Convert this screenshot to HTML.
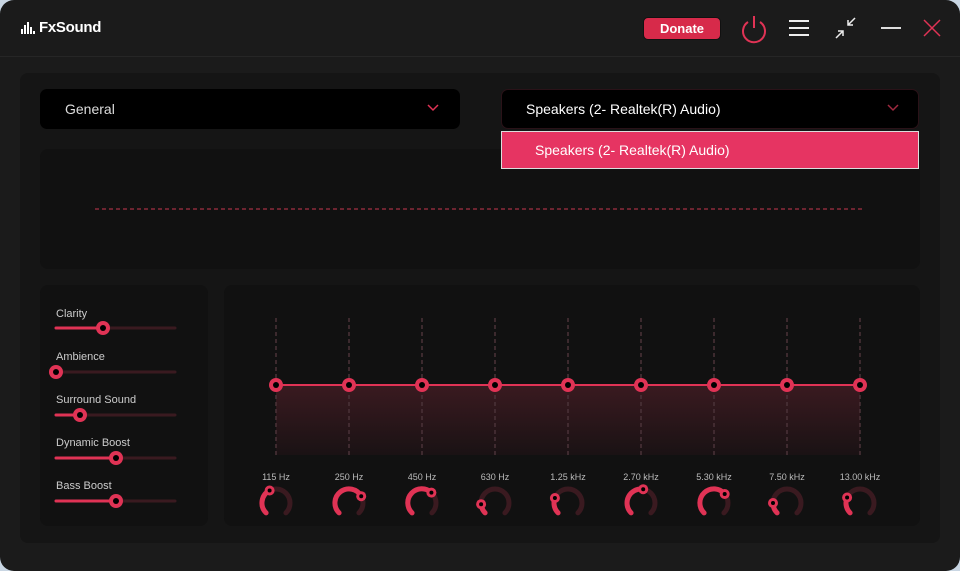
<!DOCTYPE html>
<html><head><meta charset="utf-8"><style>
html,body{margin:0;padding:0;width:960px;height:571px;overflow:hidden;background:#c9d6e3;font-family:"Liberation Sans",sans-serif}
#win{position:absolute;left:0;top:0;width:960px;height:571px;background:#1b1b1b;border-radius:14px;overflow:hidden}
.hdr{position:absolute;left:0;top:0;width:960px;height:56px;border-bottom:1px solid #262626}
.logo{position:absolute;left:21px;top:19px;color:#fff;font-weight:bold;font-size:15px;letter-spacing:-0.3px}
.don{position:absolute;left:643px;top:17px;width:76px;height:21px;background:#d72a4a;border:1px solid #111;border-radius:5px;color:#fff;font-size:13px;font-weight:bold;text-align:center;line-height:21px}
.main{position:absolute;left:20px;top:73px;width:920px;height:470px;background:#151515;border-radius:8px}
.dd{position:absolute;top:89px;height:40px;background:#000;border-radius:7px;color:#ddd;font-size:14px;line-height:40px}
.list{position:absolute;left:501px;top:131px;width:418px;height:38px;background:#e63462;border:1px solid #ddd;color:#fff;font-size:14px;line-height:36px;box-sizing:border-box;padding-left:33px}
.pan{position:absolute;background:#111;border-radius:8px}
.lab{position:absolute;left:56px;color:#ccc;font-size:11px}
</style></head><body><div id="win">
<div class="hdr"></div>
<svg style="position:absolute;left:21px;top:21px" width="16" height="14"><g fill="#fff"><rect x="0" y="8" width="2" height="5"/><rect x="3" y="4" width="2" height="9"/><rect x="6" y="1" width="2" height="12"/><rect x="9" y="6" width="2" height="7"/><rect x="12" y="10" width="2" height="3"/></g></svg>
<div class="logo" style="left:39px">FxSound</div>
<div class="don">Donate</div>
<svg style="position:absolute;left:0;top:0" width="960" height="56">
<path d="M748 22 A11 11 0 1 0 760 22" fill="none" stroke="#e03355" stroke-width="2"/><line x1="754" y1="16" x2="754" y2="28" stroke="#e03355" stroke-width="2"/>
<g stroke="#eee" stroke-width="2"><line x1="789" y1="21" x2="809" y2="21"/><line x1="789" y1="28" x2="809" y2="28"/><line x1="789" y1="35" x2="809" y2="35"/></g>
<g stroke="#eee" stroke-width="1.5" fill="none"><line x1="836" y1="38" x2="843" y2="31"/><path d="M838 31 H843 V36"/><line x1="855" y1="18" x2="848" y2="25"/><path d="M848 20 V25 H853"/></g>
<line x1="881" y1="28" x2="901" y2="28" stroke="#ddd" stroke-width="2"/>
<g stroke="#e03355" stroke-width="1.5"><line x1="924" y1="20" x2="940" y2="36"/><line x1="940" y1="20" x2="924" y2="36"/></g>
</svg>
<div class="main"></div>
<div class="pan" style="left:40px;top:149px;width:880px;height:120px"></div>
<div class="pan" style="left:40px;top:285px;width:168px;height:241px"></div>
<div class="pan" style="left:224px;top:285px;width:696px;height:241px"></div>
<div class="dd" style="left:40px;width:420px"><span style="margin-left:25px">General</span></div>
<div class="dd" style="left:501px;width:418px;border:1px solid #2a1218;box-sizing:border-box;height:40px;color:#fff;line-height:38px"><span style="margin-left:24px">Speakers (2- Realtek(R) Audio)</span></div>
<svg style="position:absolute;left:0;top:0" width="960" height="130"><path d="M428 105 L433 110 L438 105" fill="none" stroke="#e03355" stroke-width="1.5"/><path d="M888 105 L893 110 L898 105" fill="none" stroke="#a02a40" stroke-width="1.5"/></svg>
<div class="list">Speakers (2- Realtek(R) Audio)</div>
<div class="lab" style="top:308px">Clarity</div>
<div class="lab" style="top:351px">Ambience</div>
<div class="lab" style="top:394px">Surround Sound</div>
<div class="lab" style="top:437px">Dynamic Boost</div>
<div class="lab" style="top:480px">Bass Boost</div>
<svg id="s" style="position:absolute;left:0;top:0" width="960" height="571"></svg>
</div>
<script>
var h='<defs><linearGradient id="g" x1="0" y1="0" x2="0" y2="1"><stop offset="0" stop-color="#3a1a20"/><stop offset="1" stop-color="#1a1214"/></linearGradient></defs>';
h+='<line x1="95" y1="209" x2="862" y2="209" stroke="#8a2a3a" stroke-width="1.5" stroke-dasharray="4 3"/>';
var sl=[[328,103],[372,56],[415,80],[458,116],[501,116]];
sl.forEach(function(s){h+='<line x1="56" y1="'+s[0]+'" x2="175" y2="'+s[0]+'" stroke="#3a1a20" stroke-width="3" stroke-linecap="round"/><line x1="56" y1="'+s[0]+'" x2="'+s[1]+'" y2="'+s[0]+'" stroke="#e03355" stroke-width="3" stroke-linecap="round"/><circle cx="'+s[1]+'" cy="'+s[0]+'" r="7" fill="#e03355"/><circle cx="'+s[1]+'" cy="'+s[0]+'" r="3" fill="#000"/>';});
h+='<rect x="276" y="385" width="584" height="70" fill="url(#g)"/>';
var labs=['115 Hz','250 Hz','450 Hz','630 Hz','1.25 kHz','2.70 kHz','5.30 kHz','7.50 kHz','13.00 kHz'];
var ang=[-27,61,42,-95,-69,9,50,-90,-67];
for(var i=0;i<9;i++){var x=276+73*i;
h+='<line x1="'+x+'" y1="318" x2="'+x+'" y2="455" stroke="#4a3238" stroke-width="1.5" stroke-dasharray="4 3"/>';
h+='<text x="'+x+'" y="480" fill="#bbb" font-size="9" text-anchor="middle" font-family="Liberation Sans">'+labs[i]+'</text>';
var cy=503,r=14;function pt(a){a=a*Math.PI/180;return [(x+r*Math.sin(a)).toFixed(1),(cy-r*Math.cos(a)).toFixed(1)];}
var s=pt(-135),e=pt(135),v=pt(ang[i]);
h+='<path d="M'+s[0]+' '+s[1]+' A14 14 0 1 1 '+e[0]+' '+e[1]+'" fill="none" stroke="#3a1a20" stroke-width="5" stroke-linecap="round"/>';
h+='<path d="M'+s[0]+' '+s[1]+' A14 14 0 '+((ang[i]+135)>180?1:0)+' 1 '+v[0]+' '+v[1]+'" fill="none" stroke="#e03355" stroke-width="5" stroke-linecap="round"/>';
h+='<circle cx="'+v[0]+'" cy="'+v[1]+'" r="5" fill="#e03355"/><circle cx="'+v[0]+'" cy="'+v[1]+'" r="2" fill="#000"/>';}
h+='<line x1="276" y1="385" x2="860" y2="385" stroke="#e03355" stroke-width="2"/>';
for(var i=0;i<9;i++){var x=276+73*i;h+='<circle cx="'+x+'" cy="385" r="7" fill="#e03355"/><circle cx="'+x+'" cy="385" r="3" fill="#000"/>';}
document.getElementById('s').innerHTML=h;
</script>
</body></html>
